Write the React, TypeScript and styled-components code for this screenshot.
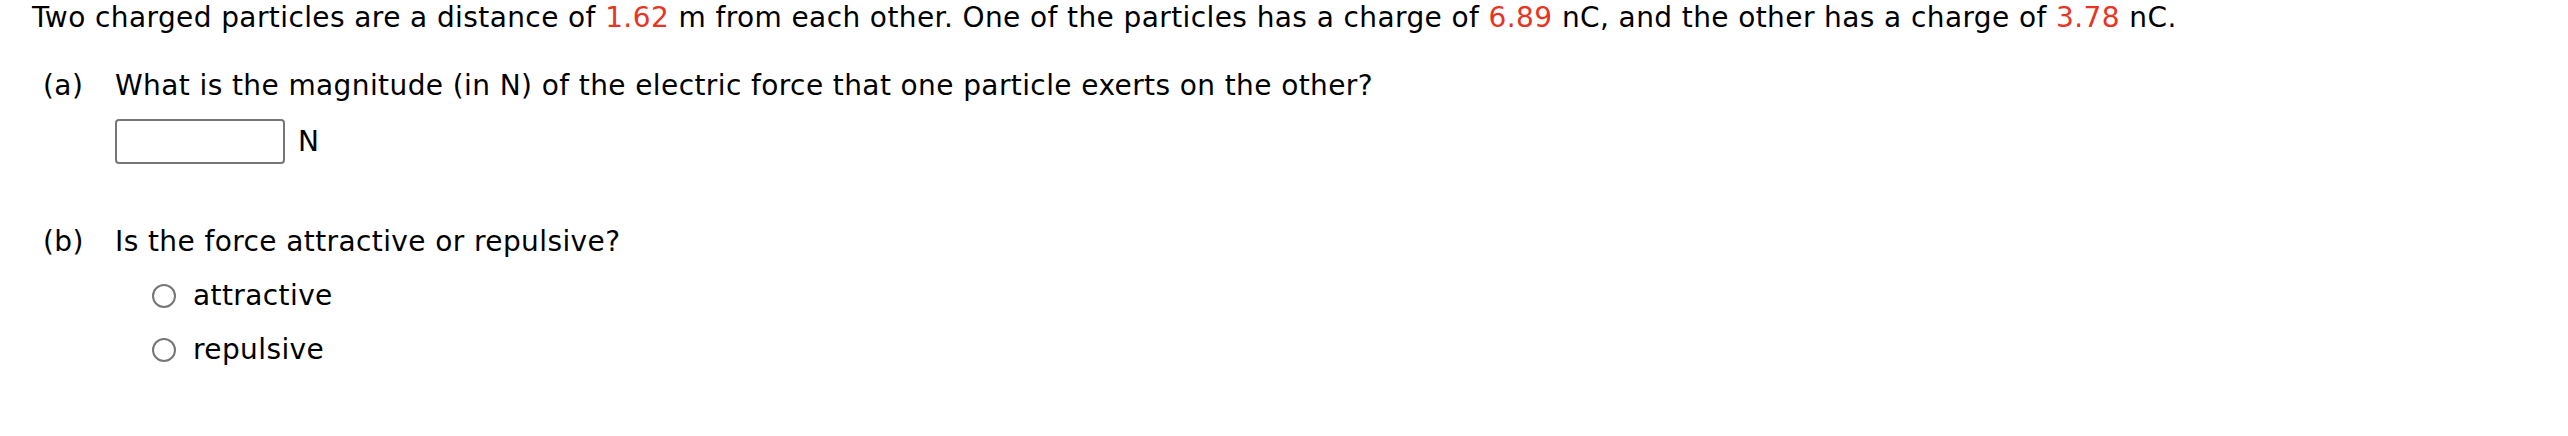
import styled, { createGlobalStyle } from "styled-components";

const GlobalStyle = createGlobalStyle`
  html, body {
    margin: 0;
    padding: 0;
    background: #ffffff;
  }
  body {
    font-family: Verdana, "DejaVu Sans", sans-serif;
    font-size: 28px;
    line-height: 36px;
    letter-spacing: 0.4px;
    color: #000000;
  }
`;

const Page = styled.div`
  padding: 0 0 0 32px;
`;

const Intro = styled.p`
  margin: 0;
  white-space: nowrap;
`;

const Value = styled.span`
  color: #ea3323;
`;

const Part = styled.section<{ $top: number }>`
  display: grid;
  grid-template-columns: 72px 1fr;
  margin: ${(props) => props.$top}px 0 0 11px;
`;

const PartLabel = styled.span``;

const PartQuestion = styled.span`
  white-space: nowrap;
`;

const AnswerRow = styled.div`
  grid-column: 2;
  display: flex;
  align-items: center;
  gap: 13px;
  margin-top: 15px;
`;

const AnswerBox = styled.input`
  box-sizing: border-box;
  width: 170px;
  height: 45px;
  margin: 0;
  border: 2px solid #767676;
  border-radius: 4px;
  background: #ffffff;
  font: inherit;
`;

const Unit = styled.span``;

const Choices = styled.div`
  grid-column: 2;
  display: flex;
  flex-direction: column;
  gap: 18px;
  margin: 18px 0 0 37px;
`;

const Choice = styled.label`
  display: flex;
  align-items: center;
  gap: 17px;
`;

const RadioDot = styled.span`
  box-sizing: border-box;
  width: 24px;
  height: 24px;
  border: 2px solid #767676;
  border-radius: 50%;
  background: #ffffff;
  flex-shrink: 0;
`;

const App = () => {
  return (
    <>
      <GlobalStyle />
      <Page>
        <Intro>
          Two charged particles are a distance of <Value>1.62</Value> m from
          each other. One of the particles has a charge of <Value>6.89</Value>{" "}
          nC, and the other has a charge of <Value>3.78</Value> nC.
        </Intro>
        <Part $top={32}>
          <PartLabel>(a)</PartLabel>
          <PartQuestion>
            What is the magnitude (in N) of the electric force that one particle
            exerts on the other?
          </PartQuestion>
          <AnswerRow>
            <AnswerBox type="text" />
            <Unit>N</Unit>
          </AnswerRow>
        </Part>
        <Part $top={60}>
          <PartLabel>(b)</PartLabel>
          <PartQuestion>Is the force attractive or repulsive?</PartQuestion>
          <Choices>
            <Choice>
              <RadioDot />
              attractive
            </Choice>
            <Choice>
              <RadioDot />
              repulsive
            </Choice>
          </Choices>
        </Part>
      </Page>
    </>
  );
};

export default App;
